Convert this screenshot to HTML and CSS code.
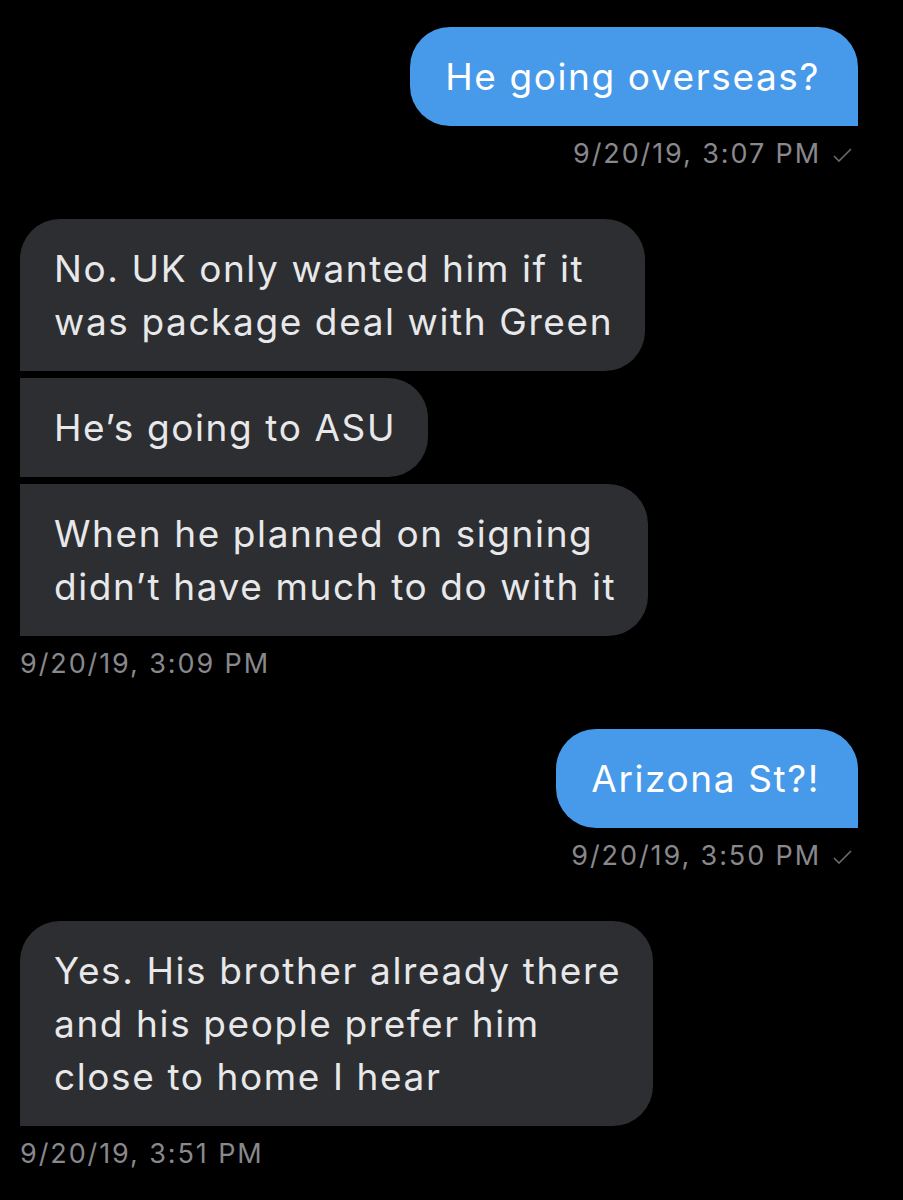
FILE: index.html
```html
<!DOCTYPE html>
<html lang="en">
<head>
<meta charset="UTF-8" />
<meta name="viewport" content="width=device-width, initial-scale=1.0">
<title>Messages</title>
<link rel="stylesheet" href="styles.css">
</head>
<body>

<div class="thread">

  <div class="group sent">
    <div class="bubble">He going overseas?</div>
    <div class="time">9/20/19, 3:07 PM
      <svg class="check" width="21" height="14" viewBox="0 0 21 14"><path d="M2 8 L7 13 L19 1" fill="none" stroke="#6c6c70" stroke-width="1.6"/></svg>
    </div>
  </div>

  <div class="group received">
    <div class="bubble first">No. UK only wanted him if it<br>was package deal with Green</div>
    <div class="bubble middle">He’s going to ASU</div>
    <div class="bubble middle">When he planned on signing<br>didn’t have much to do with it</div>
    <div class="time">9/20/19, 3:09 PM</div>
  </div>

  <div class="group sent">
    <div class="bubble">Arizona St?!</div>
    <div class="time">9/20/19, 3:50 PM
      <svg class="check" width="21" height="14" viewBox="0 0 21 14"><path d="M2 8 L7 13 L19 1" fill="none" stroke="#6c6c70" stroke-width="1.6"/></svg>
    </div>
  </div>

  <div class="group received">
    <div class="bubble first">Yes. His brother already there<br>and his people prefer him<br>close to home I hear</div>
    <div class="time">9/20/19, 3:51 PM</div>
  </div>

</div>

</body>
</html>
```

FILE: styles.css
```css
body, html { margin:0; padding:0; background:#000; font-family:Inter, "Liberation Sans", Arial, sans-serif; }
.thread { padding:27px 45px 0 20px; display:flex; flex-direction:column; gap:48px; }
.group { display:flex; flex-direction:column; gap:7px; }
.sent { align-items:flex-end; }
.received { align-items:flex-start; }

.bubble { padding:23px 35px; font-size:37px; line-height:53px; letter-spacing:1.6px; border-radius:40px; white-space:nowrap; }
.sent .bubble { background:#4799ea; color:#fff; border-bottom-right-radius:0; padding-right:38px; }
.received .bubble { background:#2c2e31; color:#e8e8ea; padding-left:34px; padding-right:32px; }
.received .first { border-bottom-left-radius:0; }
.received .middle { border-top-left-radius:0; border-bottom-left-radius:0; }

.time { margin-top:4px; font-size:27px; line-height:34px; letter-spacing:1.9px; color:#88888d; display:flex; align-items:center; }
.sent .time { margin-right:5px; }
.check { margin-left:11px; margin-top:2px; }
```
